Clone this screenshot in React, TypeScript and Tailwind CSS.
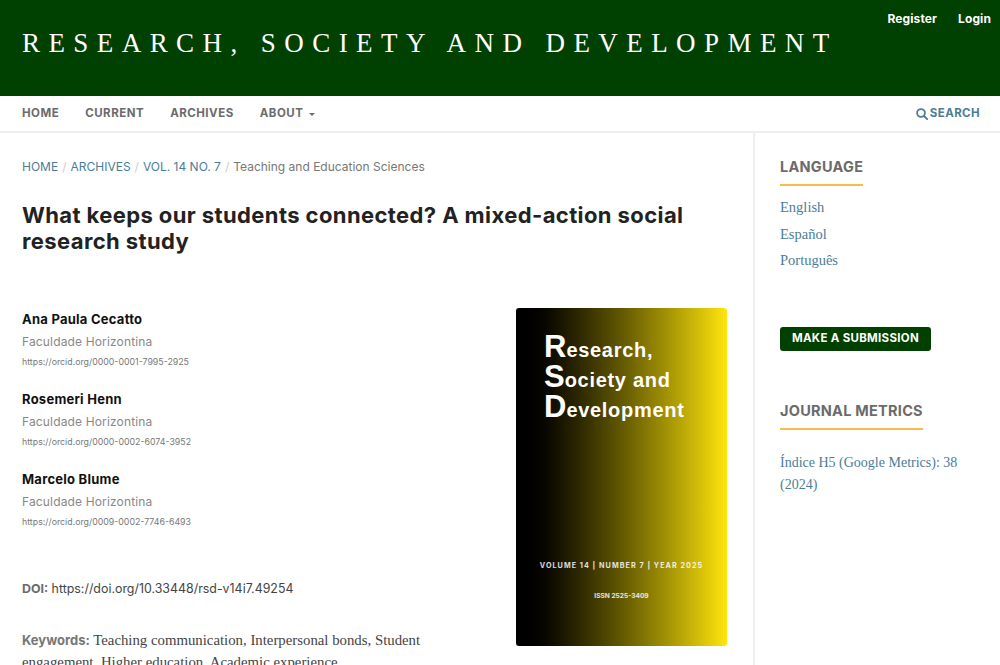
import React from "react";

const sans = "font-['Inter','Liberation_Sans',sans-serif]";
const serif = "font-['Liberation_Serif',serif]";

const authors = [
  { name: "Ana Paula Cecatto", orcid: "https://orcid.org/0000-0001-7995-2925" },
  { name: "Rosemeri Henn", orcid: "https://orcid.org/0000-0002-6074-3952" },
  { name: "Marcelo Blume", orcid: "https://orcid.org/0009-0002-7746-6493" },
];

function SearchIcon() {
  return (
    <svg width="12" height="12" viewBox="0 0 12 12" fill="none" stroke="#4b7d97" strokeWidth="1.8">
      <circle cx="5" cy="5" r="3.9" />
      <path d="M8 8l3.2 3.2" strokeLinecap="round" />
    </svg>
  );
}

function Cap({ big, rest }: { big: string; rest: string }) {
  return (
    <div className="leading-[29px] h-[30px] whitespace-nowrap">
      <span className="text-[31px]">{big}</span>
      <span className="text-[20px] tracking-[0.7px]">{rest}</span>
    </div>
  );
}

function Cover() {
  return (
    <div className="w-[211px] h-[338px] shrink-0 rounded-[3px] bg-gradient-to-r from-black to-[#ffe60d] text-white flex flex-col font-['Liberation_Sans',sans-serif] font-bold">
      <div className="pl-[28px] pt-[24px]">
        <Cap big="R" rest="esearch," />
        <Cap big="S" rest="ociety and" />
        <Cap big="D" rest="evelopment" />
      </div>
      <div className={`mt-[138px] text-center text-[7.2px] leading-[11px] tracking-[1.05px] text-white/85 ${sans}`}>VOLUME 14 | NUMBER 7 | YEAR 2025</div>
      <div className={`mt-[20px] text-center text-[6.6px] leading-[11px] text-white/85 ${sans}`}>ISSN 2525-3409</div>
    </div>
  );
}

function SideHead({ children }: { children: React.ReactNode }) {
  return (
    <div className="flex">
      <h2 className={`${sans} font-bold text-[#6b6b6b] text-[14.5px] tracking-[0.25px] leading-[20px] pb-[7px] border-b-2 border-[#f7bc4a]`}>{children}</h2>
    </div>
  );
}

export default function App() {
  return (
    <div className={`h-[665px] w-[1000px] overflow-hidden bg-white ${sans}`}>
      <header className="h-[96px] bg-[#004000] flex justify-between pl-[22px] pr-[9px]">
        <div className={`pt-[28px] ${serif} text-white text-[27px] leading-[31px] tracking-[8.43px] whitespace-nowrap`}>
          RESEARCH, SOCIETY AND DEVELOPMENT
        </div>
        <div className="flex gap-[21px] pt-[10px] text-white font-bold text-[12px] leading-[17px] tracking-[0.1px]">
          <span>Register</span>
          <span>Login</span>
        </div>
      </header>

      <nav className="h-[37px] border-b-2 border-[#eeeeee] flex items-center justify-between pl-[22px] pr-[20px] pt-[1px]">
        <div className="flex gap-[26px] text-[#6b6b6b] font-bold text-[11.5px] tracking-[0.5px]">
          <span>HOME</span>
          <span>CURRENT</span>
          <span>ARCHIVES</span>
          <span className="flex items-center gap-[6px]">
            ABOUT
            <span className="w-0 h-0 border-x-[3px] border-x-transparent border-t-[3px] border-t-[#6b6b6b]" />
          </span>
        </div>
        <div className="flex items-center gap-[2px] text-[#4b7d97] font-bold text-[11.5px] tracking-[0.4px]">
          <SearchIcon />
          <span>SEARCH</span>
        </div>
      </nav>

      <div className="flex">
        <main className="w-[753px] pl-[22px] pr-[26px] shrink-0">
          <div className="pt-[26px] text-[12px] leading-[16px] text-[#777] flex gap-[4px] whitespace-nowrap">
            <span className="text-[#4b7d97]">HOME</span>
            <span className="text-[#ccc]">/</span>
            <span className="text-[#4b7d97]">ARCHIVES</span>
            <span className="text-[#ccc]">/</span>
            <span className="text-[#4b7d97]">VOL. 14 NO. 7</span>
            <span className="text-[#ccc]">/</span>
            <span>Teaching and Education Sciences</span>
          </div>

          <h1 className="mt-[28px] text-[22px] leading-[25.5px] font-bold text-[#222] tracking-[0.4px]">
            What keeps our students connected? A mixed-action social research study
          </h1>

          <div className="mt-[54px] flex justify-between">
            <div className="min-w-0">
              {authors.map((a) => (
                <div key={a.name} className="h-[80px]">
                  <div className="text-[13px] leading-[20px] font-bold text-[#111] pt-[1px] tracking-[0.25px]">{a.name}</div>
                  <div className="text-[12px] leading-[18px] text-[#888] mt-[4px] tracking-[0.15px]">Faculdade Horizontina</div>
                  <div className="text-[8.8px] leading-[14px] text-[#777] mt-[4px]">{a.orcid}</div>
                </div>
              ))}
              <div className="mt-[32px] text-[12.4px] leading-[18px] text-[#444]">
                <b className="text-[#6b6b6b]">DOI:</b> https://doi.org/10.33448/rsd-v14i7.49254
              </div>
              <div className={`mt-[31px] ${serif} text-[14.8px] leading-[22px] text-[#444] w-[430px]`}>
                <b className={`${sans} text-[13px] text-[#777]`}>Keywords:</b> Teaching communication, Interpersonal bonds, Student engagement, Higher education, Academic experience
              </div>
            </div>
            <Cover />
          </div>
        </main>

        <aside className="flex-1 h-[540px] border-l-2 border-[#eeeeee] pl-[25px] pt-[24px]">
          <SideHead>LANGUAGE</SideHead>
          <ul className={`${serif} text-[14.5px] text-[#4b7d97] mt-[8px] leading-[26.5px]`}>
            <li>English</li>
            <li>Español</li>
            <li>Português</li>
          </ul>
          <div className="mt-[53px] flex">
            <span className="h-[24px] w-[151px] rounded-[3px] bg-[#004000] text-white font-bold text-[11.5px] tracking-[0.3px] flex items-center justify-center">MAKE A SUBMISSION</span>
          </div>
          <div className="mt-[50px]">
            <SideHead>JOURNAL METRICS</SideHead>
          </div>
          <p className={`${serif} text-[14px] text-[#4b7d97] mt-[22px] leading-[22px] w-[190px]`}>Índice H5 (Google Metrics): 38 (2024)</p>
        </aside>
      </div>
    </div>
  );
}
